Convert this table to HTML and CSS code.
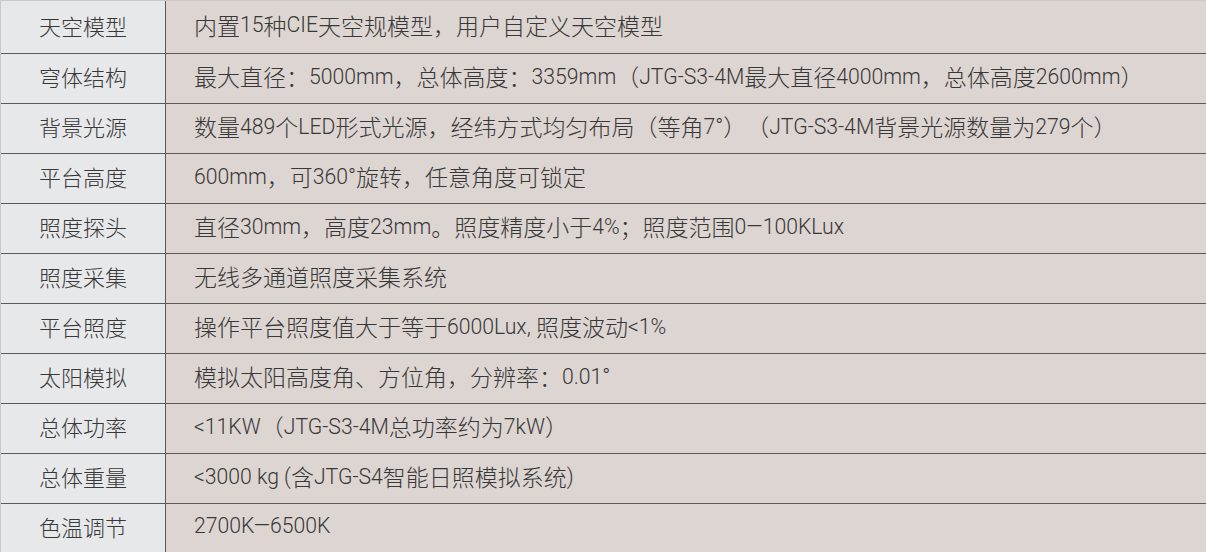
FILE: index.html
```html
<!DOCTYPE html>
<html lang="zh-CN">
<head>
<meta charset="utf-8">
<title>技术参数</title>
<link rel="stylesheet" href="styles.css">
</head>
<body>
<div class="spec">
  <div class="row first"><div class="label">天空模型</div><div class="value">内置<span class="n">15</span>种<span class="n">CIE</span>天空规模型，用户自定义天空模型</div></div>
  <div class="row"><div class="label">穹体结构</div><div class="value">最大直径：<span class="n">5000mm</span>，总体高度：<span class="n">3359mm</span>（<span class="n">JTG-S3-4M</span>最大直径<span class="n">4000mm</span>，总体高度<span class="n">2600mm</span>）</div></div>
  <div class="row"><div class="label">背景光源</div><div class="value">数量<span class="n">489</span>个<span class="n">LED</span>形式光源，经纬方式均匀布局（等角<span class="n">7°</span>）（<span class="n">JTG-S3-4M</span>背景光源数量为<span class="n">279</span>个）</div></div>
  <div class="row"><div class="label">平台高度</div><div class="value"><span class="n">600mm</span>，可<span class="n">360°</span>旋转，任意角度可锁定</div></div>
  <div class="row"><div class="label">照度探头</div><div class="value">直径<span class="n">30mm</span>，高度<span class="n">23mm</span>。照度精度小于<span class="n">4%</span>；照度范围<span class="n">0—100KLux</span></div></div>
  <div class="row"><div class="label">照度采集</div><div class="value">无线多通道照度采集系统</div></div>
  <div class="row"><div class="label">平台照度</div><div class="value">操作平台照度值大于等于<span class="n">6000Lux, </span>照度波动<span class="n">&lt;1%</span></div></div>
  <div class="row"><div class="label">太阳模拟</div><div class="value">模拟太阳高度角、方位角，分辨率：<span class="n">0.01°</span></div></div>
  <div class="row"><div class="label">总体功率</div><div class="value"><span class="n">&lt;11KW</span>（<span class="n">JTG-S3-4M</span>总功率约为<span class="n">7kW</span>）</div></div>
  <div class="row"><div class="label">总体重量</div><div class="value"><span class="n">&lt;3000 kg (</span>含<span class="n">JTG-S4</span>智能日照模拟系统<span class="n">)</span></div></div>
  <div class="row last"><div class="label">色温调节</div><div class="value"><span class="n">2700K—6500K</span></div></div>
</div>
</body>
</html>
```
FILE: styles.css
```css
html, body {
  margin: 0;
  padding: 0;
  background: #ddd5d1;
}
body {
  width: 1206px;
  height: 552px;
  overflow: hidden;
  font-family: "Noto Sans CJK SC", sans-serif;
  font-weight: 300;
  color: #383838;
  text-spacing-trim: space-all;
}
.spec {
  border-top: 1px solid #c9c9c9;
  border-left: 1px solid #c9c9c9;
}
.row {
  display: grid;
  grid-template-columns: 165px 1fr;
  height: 49px;
  border-bottom: 1px solid #5a5a5a;
}
.row.first {
  height: 52px;
}
.row.last {
  height: 48px;
  border-bottom: none;
}
.label {
  background: #e7e8ea;
  border-right: 1px solid #5a5a5a;
  display: flex;
  align-items: center;
  justify-content: center;
  padding-bottom: 5px;
  font-size: 22px;
}
.value {
  background: #ddd5d1;
  display: flex;
  align-items: center;
  padding-left: 28px;
  padding-bottom: 5px;
  font-size: 23px;
  white-space: pre;
}
.n {
  font-family: Roboto, "Liberation Sans", sans-serif;
  font-weight: 300;
  font-size: 21.2px;
}
```
